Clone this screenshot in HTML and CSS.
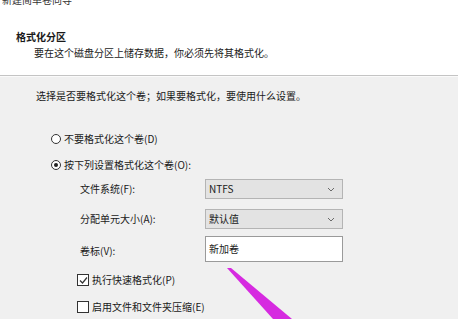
FILE: index.html
```html
<!DOCTYPE html>
<html>
<head>
<meta charset="utf-8">
<link rel="stylesheet" href="styles.css">
</head>
<body>
<div class="page">
  <div class="header">
    <div class="wizard-title">新建简单卷向导</div>
    <div class="h-title">格式化分区</div>
    <div class="h-sub">要在这个磁盘分区上储存数据，你必须先将其格式化。</div>
  </div>
  <div class="content">
    <div class="prompt">选择是否要格式化这个卷；如果要格式化，要使用什么设置。</div>
    <div class="option opt-first">
      <span class="radio"></span><span>不要格式化这个卷(D)</span>
    </div>
    <div class="option opt-second">
      <span class="radio checked"></span><span>按下列设置格式化这个卷(O):</span>
    </div>
    <div class="settings">
      <div class="label">文件系统(F):</div>
      <div class="select"><span>NTFS</span><svg class="chev" width="8" height="5" viewBox="0 0 8 5"><path d="M1 1 L4 4 L7 1" fill="none" stroke="#6a6a6a" stroke-width="1"/></svg></div>
      <div class="label">分配单元大小(A):</div>
      <div class="select"><span>默认值</span><svg class="chev" width="8" height="5" viewBox="0 0 8 5"><path d="M1 1 L4 4 L7 1" fill="none" stroke="#6a6a6a" stroke-width="1"/></svg></div>
      <div class="label">卷标(V):</div>
      <div class="input">新加卷</div>
    </div>
    <div class="check-row check-first">
      <span class="checkbox"><svg width="9" height="9" viewBox="0 0 9 9"><path d="M1 4.5 L3.5 7 L8 1.5" fill="none" stroke="#333" stroke-width="1.2"/></svg></span><span>执行快速格式化(P)</span>
    </div>
    <div class="check-row check-second">
      <span class="checkbox"></span><span>启用文件和文件夹压缩(E)</span>
    </div>
  </div>
  <svg class="arrow" width="458" height="319" viewBox="0 0 458 319">
    <polygon points="227,268 231,268 292,319 273,319" fill="#d62ae0"/>
  </svg>
</div>
</body>
</html>
```
FILE: styles.css
```css
html, body {
  margin: 0;
  padding: 0;
}
body {
  width: 458px;
  height: 319px;
  overflow: hidden;
  background: #f0f0f0;
  font-family: "Noto Sans CJK SC", "Noto Sans", sans-serif;
  font-size: 10px;
  line-height: 16px;
  color: #1a1a1a;
}
.page {
  position: relative;
  height: 319px;
}
.header {
  height: 75px;
  background: #fff;
  border-bottom: 1px solid #c4c4c4;
  box-shadow: 0 1px 0 #fafafa;
  overflow: hidden;
}
.wizard-title {
  margin-top: -8px;
  padding-left: 2px;
  color: #333;
}
.h-title {
  margin-top: 21px;
  padding-left: 16px;
  font-weight: bold;
}
.h-sub {
  margin-top: 0;
  padding-left: 34px;
}
.content {
  padding-left: 36px;
}
.prompt {
  margin-top: 12px;
}
.option {
  display: flex;
  align-items: center;
  gap: 2px;
  padding-left: 15px;
}
.opt-first {
  margin-top: 27px;
}
.opt-second {
  margin-top: 10px;
}
.radio {
  width: 10px;
  height: 10px;
  border: 1px solid #333;
  border-radius: 50%;
  box-sizing: border-box;
  background: #fff;
  position: relative;
  margin-right: 1px;
}
.radio.checked::after {
  content: "";
  position: absolute;
  left: 2px;
  top: 2px;
  width: 4px;
  height: 4px;
  border-radius: 50%;
  background: #222;
}
.settings {
  display: grid;
  grid-template-columns: 125px 138px;
  row-gap: 10px;
  align-items: center;
  margin-top: 6px;
  padding-left: 44px;
}
.label {
  color: #1a1a1a;
}
.select {
  height: 20px;
  box-sizing: border-box;
  border: 1px solid #b4b4b4;
  background: #e3e3e3;
  display: flex;
  align-items: center;
  justify-content: space-between;
  padding: 0 7px 0 3px;
}
.input {
  height: 26px;
  box-sizing: border-box;
  border: 1px solid #9a9a9a;
  background: #fff;
  display: flex;
  align-items: center;
  padding-left: 3px;
  margin-top: -3px;
}
.check-row {
  display: flex;
  align-items: center;
  gap: 3px;
  padding-left: 41px;
}
.check-first {
  margin-top: 10px;
}
.check-second {
  margin-top: 11px;
}
.checkbox {
  width: 12px;
  height: 12px;
  box-sizing: border-box;
  border: 1px solid #333;
  background: #fff;
  display: flex;
  align-items: center;
  justify-content: center;
}
.arrow {
  position: absolute;
  left: 0;
  top: 0;
  pointer-events: none;
}
```
